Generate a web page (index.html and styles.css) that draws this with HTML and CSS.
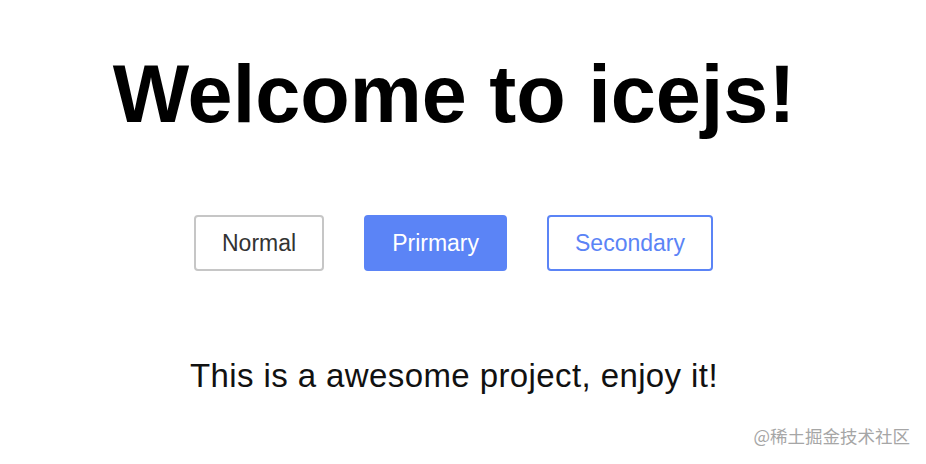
FILE: index.html
```html
<!DOCTYPE html>
<html lang="en">
<head>
<meta charset="utf-8">
<title>icejs</title>
<link rel="stylesheet" href="styles.css">
</head>
<body>
<main class="page">
  <h1 class="title">Welcome to icejs!</h1>
  <div class="actions">
    <button class="btn btn-normal">Normal</button>
    <button class="btn btn-primary">Prirmary</button>
    <button class="btn btn-secondary">Secondary</button>
  </div>
  <p class="tagline">This is a awesome project, enjoy it!</p>
</main>
<div class="watermark">@稀土掘金技术社区</div>
</body>
</html>
```
FILE: styles.css
```css
html, body {
  margin: 0;
  padding: 0;
  background: #ffffff;
}
body {
  width: 926px;
  height: 464px;
  position: relative;
  overflow: hidden;
  font-family: "Liberation Sans", Arial, sans-serif;
}
.page {
  display: flex;
  flex-direction: column;
  align-items: center;
  padding-top: 48px;
}
.title {
  margin: 0 0 0 -18px;
  font-size: 81px;
  line-height: 92px;
  font-weight: 700;
  color: #000;
}
.actions {
  display: flex;
  gap: 40px;
  margin-top: 75px;
  margin-left: -19px;
}
.btn {
  height: 56px;
  box-sizing: border-box;
  padding: 0 26px;
  font-family: "Liberation Sans", Arial, sans-serif;
  font-size: 23px;
  border-radius: 4px;
  background: #fff;
  cursor: pointer;
}
.btn-normal {
  border: 2px solid #c6c6c6;
  color: #333;
}
.btn-primary {
  border: 2px solid #5b84f6;
  background: #5b84f6;
  color: #fff;
}
.btn-secondary {
  border: 2px solid #5b84f6;
  color: #5b84f6;
}
.tagline {
  margin: 85px 0 0 -18px;
  font-size: 33px;
  line-height: 40px;
  letter-spacing: 0.4px;
  color: #111;
}
.watermark {
  position: absolute;
  right: 16px;
  bottom: 16px;
  font-family: "Noto Sans CJK SC", sans-serif;
  font-size: 17.5px;
  color: #a6a6a6;
}
```
